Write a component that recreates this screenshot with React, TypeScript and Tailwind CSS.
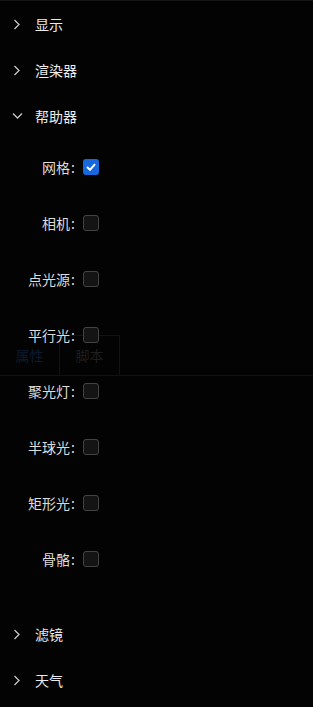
const font = { fontFamily: '"Noto Sans CJK SC", "Noto Sans", sans-serif' };

function Header({ label, open }: { label: string; open?: boolean }) {
  return (
    <div className="flex h-[46px] items-center text-[14px] text-[#ebebeb]">
      <span className="flex w-[35px] items-center justify-start pl-[12px]">
        {open ? (
          <svg width="11" height="8" viewBox="0 0 11 8" fill="none" stroke="#c8c8c8" strokeWidth="1.3">
            <polyline points="1,1.5 5.5,6 10,1.5" />
          </svg>
        ) : (
          <svg width="8" height="11" viewBox="0 0 8 11" fill="none" stroke="#c8c8c8" strokeWidth="1.3" className="ml-[1px]">
            <polyline points="1.5,1 6,5.5 1.5,10" />
          </svg>
        )}
      </span>
      <span>{label}</span>
    </div>
  );
}

function Row({ label, checked }: { label: string; checked?: boolean }) {
  return (
    <div className="flex h-[56px] items-center text-[14px] text-[#dcdcdc]">
      <span className="w-[76px] text-right">
        {label}
        <span className="ml-[1px] mr-[1px]">:</span>
      </span>
      <span
        className={
          checked
            ? "ml-[7px] flex h-[16px] w-[16px] items-center justify-center rounded-[3px] bg-[#1668dc]"
            : "ml-[7px] h-[16px] w-[16px] rounded-[3px] border border-[#434343] bg-[#141414]"
        }
      >
        {checked && (
          <svg width="10" height="8" viewBox="0 0 10 8" fill="none" stroke="white" strokeWidth="2">
            <polyline points="1,4 4,6.8 9,1.2" />
          </svg>
        )}
      </span>
    </div>
  );
}

export default function App() {
  const helpers = ["相机", "点光源", "平行光", "聚光灯", "半球光", "矩形光", "骨骼"];
  return (
    <div className="relative h-[707px] w-[313px] overflow-hidden border-t border-[#151515] bg-[#030303]" style={font}>
      {/* tabs peeking through behind the panel */}
      <div className="absolute left-0 top-[334px] flex h-[41px] w-full border-b border-[#111111]">
        <div className="flex w-[59px] items-center justify-center text-[14px] text-[#0a1c31]">属性</div>
        <div className="flex w-[61px] items-center justify-center border border-b-0 border-[#131313] text-[14px] text-[#1e1e1e]">
          脚本
        </div>
      </div>
      <div className="relative">
        <Header label="显示" />
        <Header label="渲染器" />
        <Header label="帮助器" open />
        <div>
          <Row label="网格" checked />
          {helpers.map((h) => (
            <Row key={h} label={h} />
          ))}
        </div>
        <div className="h-[24px]" />
        <Header label="滤镜" />
        <Header label="天气" />
      </div>
    </div>
  );
}
